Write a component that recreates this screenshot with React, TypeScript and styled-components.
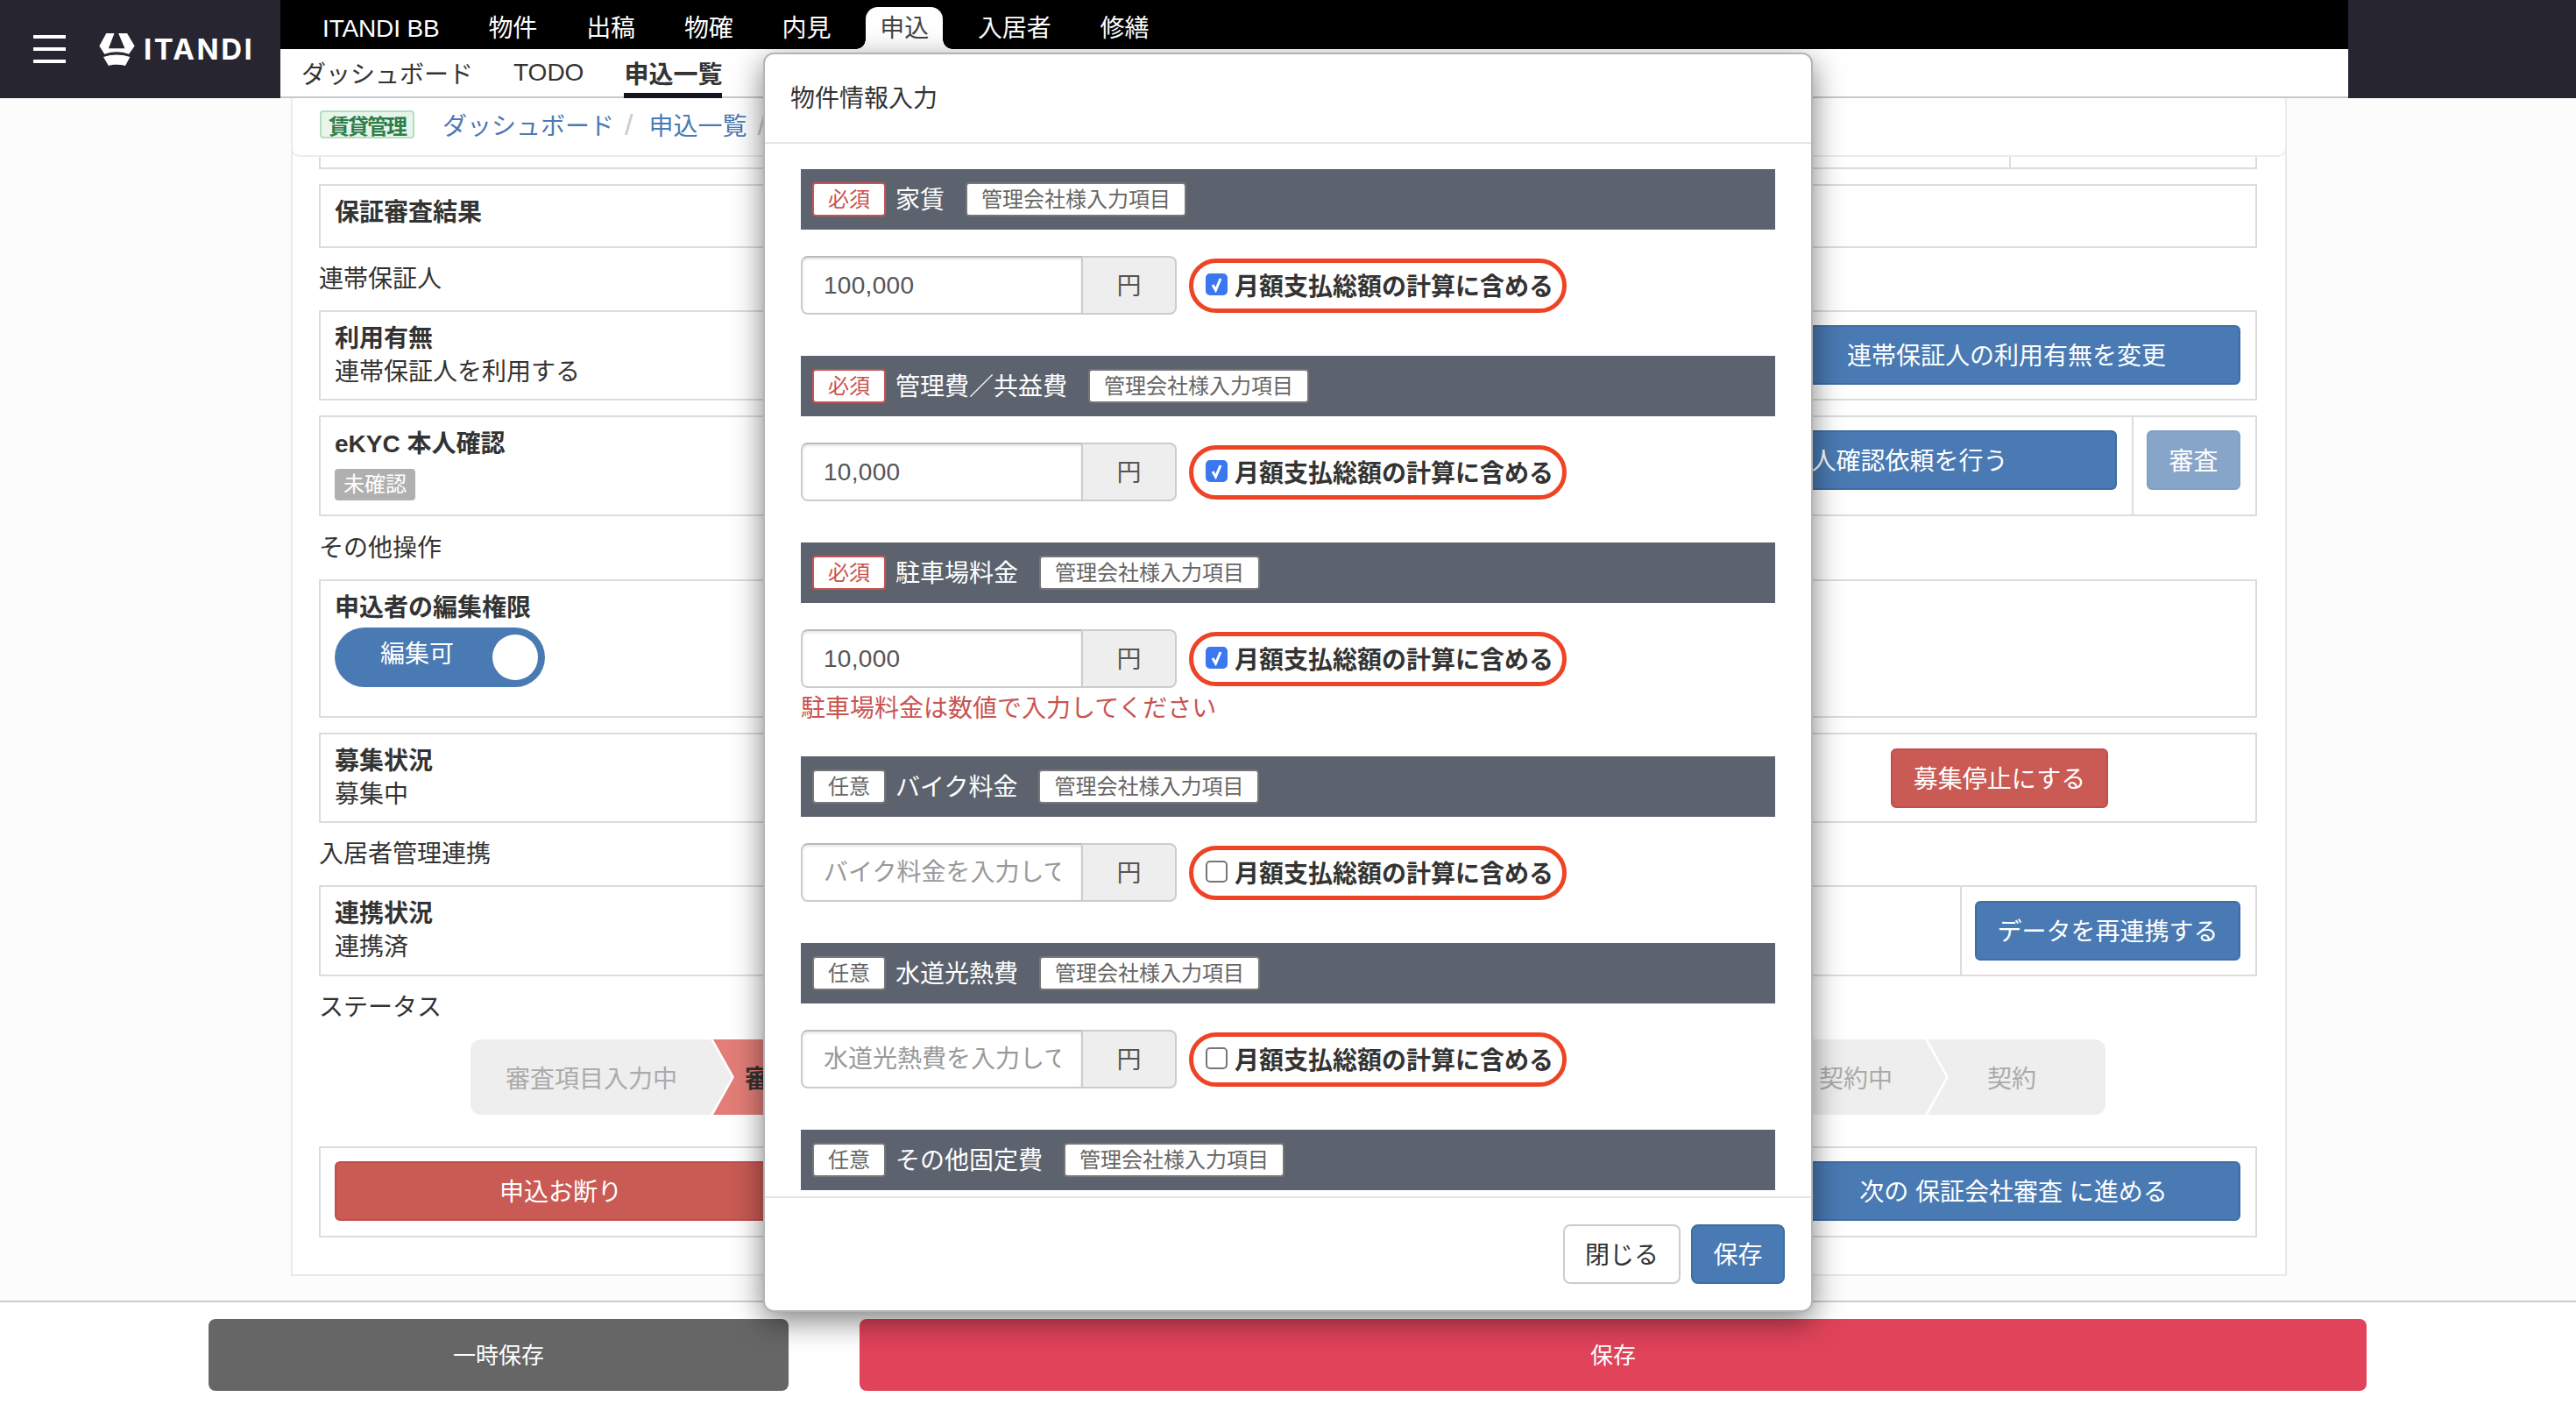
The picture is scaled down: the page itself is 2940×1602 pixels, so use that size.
import styled, { createGlobalStyle } from 'styled-components';

const FONT = `"Liberation Sans", "Noto Sans CJK JP", sans-serif`;

const GlobalStyle = createGlobalStyle`
  html, body {
    margin: 0;
    padding: 0;
    background: #fcfcfc;
    color: #333;
    font-family: ${FONT};
    font-size: 28px;
  }
  * {
    box-sizing: border-box;
  }
`;

const Page = styled.div`
  position: relative;
  width: 2940px;
  height: 1602px;
  overflow: hidden;
  background: #fcfcfc;
`;

/* header */
const Header = styled.header`
  display: flex;
  height: 112px;
  background: #272530;
`;

const Brand = styled.div`
  width: 320px;
  flex: none;
  display: flex;
  align-items: center;
  padding-left: 38px;
`;

const Burger = styled.div`
  width: 37px;
  height: 32px;
  display: flex;
  flex-direction: column;
  justify-content: space-between;
  margin-right: 37px;

  span {
    display: block;
    height: 4px;
    background: #fff;
  }
`;

const LogoText = styled.span`
  margin-left: 9px;
  font-family: Inter, ${FONT};
  font-size: 33px;
  font-weight: 700;
  color: #fff;
  letter-spacing: 2.5px;
`;

const NavStack = styled.div`
  width: 2360px;
  flex: none;
  display: flex;
  flex-direction: column;
`;

const TopNav = styled.nav`
  height: 56px;
  background: #000;
  display: flex;
  align-items: flex-end;
  padding-left: 20px;
  letter-spacing: -0.15px;
`;

const TopItem = styled.div<{ $active?: boolean }>`
  position: relative;
  height: ${({ $active }) => ($active ? '48px' : '56px')};
  padding: ${({ $active }) => ($active ? '2px 16px 0' : '10px 28px 0')};
  margin: 0 ${({ $active }) => ($active ? '12px' : '0')};
  display: flex;
  align-items: center;
  color: ${({ $active }) => ($active ? '#444' : '#fff')};
  background: ${({ $active }) => ($active ? '#fff' : 'transparent')};
  border-radius: 14px 14px 0 0;
  font-size: 28px;
  line-height: 1;

  ${({ $active }) =>
    $active &&
    `
    &::before, &::after {
      content: '';
      position: absolute;
      bottom: 0;
      width: 11px;
      height: 11px;
    }
    &::before {
      left: -11px;
      background: radial-gradient(circle at 0 0, #000 10.5px, #fff 11px);
    }
    &::after {
      right: -11px;
      background: radial-gradient(circle at 100% 0, #000 10.5px, #fff 11px);
    }
  `}
`;

const SubNav = styled.nav`
  height: 56px;
  background: #fff;
  border-bottom: 2px solid #c8c8cc;
  display: flex;
  padding-left: 24px;
  gap: 46px;
`;

const SubItem = styled.div<{ $active?: boolean }>`
  height: 56px;
  display: flex;
  align-items: center;
  font-size: 28px;
  font-weight: ${({ $active }) => ($active ? 700 : 400)};
  border-bottom: ${({ $active }) => ($active ? '6px solid #161320' : 'none')};
  padding-top: ${({ $active }) => ($active ? '6px' : '0')};
  padding-bottom: 2px;
`;

/* main card */
const MainCard = styled.main`
  width: 2278px;
  height: 1344px;
  margin-left: 332px;
  background: #fff;
  border: 2px solid #e9e9ec;
  border-top: none;
  display: flex;
  flex-direction: column;
  padding: 0 32px 0 30px;
  position: relative;
`;

const Breadcrumb = styled.div`
  position: absolute;
  left: -2px;
  top: 0;
  width: 2278px;
  height: 67px;
  background: #fff;
  border: 2px solid #ebebf0;
  border-top: none;
  border-radius: 0 0 10px 10px;
  display: flex;
  align-items: center;
  padding: 0 0 5px 31px;
  z-index: 2;
`;

const Badge = styled.span`
  width: 108px;
  height: 32px;
  background: #e8f5ea;
  border: 2px solid #b9dcc2;
  border-radius: 4px;
  color: #2f7d4a;
  font-size: 24px;
  font-weight: 700;
  letter-spacing: -2px;
  display: flex;
  align-items: center;
  justify-content: center;
  margin-right: 32px;
`;

const Crumb = styled.a`
  color: #4a7ab3;
  font-size: 28px;
`;

const CrumbSep = styled.span`
  color: #ccc;
  margin: 0 18px 0 12px;
  font-size: 34px;
  line-height: 1;
`;

const Row = styled.div<{ $h: number; $mt?: number }>`
  height: ${({ $h }) => $h}px;
  margin-top: ${({ $mt }) => $mt ?? 0}px;
  flex: none;
  border: 2px solid #dcdcde;
  display: flex;
`;

const ButtonRow = styled(Row)`
  align-items: center;
  justify-content: space-between;
  padding: 0 17px 2px 16px;
`;

const RowMain = styled.div`
  flex: 1;
  padding: 12px 16px 0;
  min-width: 0;
  line-height: 38px;
`;

const RowSide = styled.div<{ $w: number; $line?: boolean; $center?: boolean; $raised?: boolean }>`
  width: ${({ $w }) => $w}px;
  flex: none;
  display: flex;
  align-items: ${({ $raised }) => ($raised ? 'flex-start' : 'center')};
  justify-content: ${({ $center }) => ($center ? 'center' : 'flex-end')};
  padding-right: ${({ $center }) => ($center ? '0' : '17px')};
  padding-top: ${({ $raised }) => ($raised ? '15px' : '0')};
  border-left: ${({ $line }) => ($line ? '2px solid #dcdcde' : 'none')};
`;

const RowTitle = styled.div`
  font-weight: 700;
  font-size: 28px;
  color: #333;
`;

const RowValue = styled.div`
  font-size: 28px;
  color: #333;
`;

const SectionLabel = styled.div<{ $mt: number }>`
  height: 38px;
  line-height: 40px;
  margin-top: ${({ $mt }) => $mt}px;
  margin-bottom: 17px;
  font-size: 28px;
  color: #333;
`;

const GrayBadge = styled.span`
  display: inline-flex;
  align-items: center;
  justify-content: center;
  width: 92px;
  height: 36px;
  margin-top: 9px;
  background: #b0b0b0;
  color: #fff;
  border-radius: 4px;
  font-size: 24px;
  line-height: 1;
`;

const Toggle = styled.div`
  width: 240px;
  height: 68px;
  margin-top: 3px;
  border-radius: 34px;
  background: #4a7ab3;
  color: #fff;
  display: flex;
  align-items: center;
  justify-content: space-between;
  padding: 0 8px 0 52px;
  font-size: 28px;

  span {
    margin-bottom: 6px;
    line-height: 1;
  }

  i {
    width: 52px;
    height: 52px;
    border-radius: 50%;
    background: #fff;
  }
`;

const ActionButton = styled.button<{ $tone?: 'blue' | 'red' | 'muted'; $w: number }>`
  width: ${({ $w }) => $w}px;
  height: 68px;
  flex: none;
  padding: 0 0 2px;
  border: 2px solid
    ${({ $tone }) => ($tone === 'red' ? '#c14f49' : $tone === 'muted' ? '#80a0c6' : '#3f6da6')};
  border-radius: 6px;
  background: ${({ $tone }) => ($tone === 'red' ? '#c95a54' : $tone === 'muted' ? '#87a5c9' : '#4a7ab3')};
  color: #fff;
  font-family: ${FONT};
  font-size: 28px;
`;

/* stepper */
const Stepper = styled.div`
  height: 86px;
  margin: 1px 0 0 173px;
  width: 1866px;
  display: flex;
  flex: none;
  border-radius: 12px;
  overflow: hidden;
`;

const Step = styled.div<{ $w: number; $current?: boolean; $first?: boolean; $last?: boolean; $textLeft: number }>`
  width: ${({ $w }) => $w}px;
  flex: none;
  height: 86px;
  margin-left: ${({ $first }) => ($first ? '0' : '-21px')};
  padding-left: ${({ $textLeft }) => $textLeft}px;
  display: flex;
  align-items: center;
  background: ${({ $current }) => ($current ? '#e27d77' : '#eee')};
  color: ${({ $current }) => ($current ? '#333' : '#aaa')};
  font-size: 28px;
  font-weight: ${({ $current }) => ($current ? 700 : 400)};
  clip-path: ${({ $first, $last }) =>
    $first
      ? 'polygon(0 0, calc(100% - 24px) 0, 100% 50%, calc(100% - 24px) 100%, 0 100%)'
      : $last
        ? 'polygon(0 0, 100% 0, 100% 100%, 0 100%, 24px 50%)'
        : 'polygon(0 0, calc(100% - 24px) 0, 100% 50%, calc(100% - 24px) 100%, 0 100%, 24px 50%)'};
`;

/* footer bar */
const BottomBar = styled.footer`
  position: absolute;
  left: 0;
  top: 1484px;
  width: 2940px;
  height: 118px;
  background: #fff;
  border-top: 2px solid #ccc;
  display: flex;
  padding: 19px 239px 0 238px;
  gap: 81px;
`;

const BottomButton = styled.button<{ $grow?: boolean }>`
  height: 82px;
  padding: 0 0 4px;
  border: none;
  border-radius: 8px;
  width: ${({ $grow }) => ($grow ? 'auto' : '662px')};
  flex: ${({ $grow }) => ($grow ? '1' : 'none')};
  background: ${({ $grow }) => ($grow ? '#e0435a' : '#666')};
  color: #fff;
  font-family: ${FONT};
  font-size: 26px;
`;

/* modal */
const Modal = styled.section`
  position: absolute;
  left: 871px;
  top: 60px;
  width: 1198px;
  height: 1437px;
  background: #fff;
  border: 2px solid #b4b4b4;
  border-radius: 12px;
  box-shadow: 0 10px 34px rgba(0, 0, 0, 0.5);
  display: flex;
  flex-direction: column;
  z-index: 5;
`;

const ModalHead = styled.div`
  height: 102px;
  flex: none;
  border-bottom: 2px solid #e5e5e5;
  display: flex;
  align-items: center;
  padding: 0 0 4px 29px;
  font-size: 28px;
  color: #333;
`;

const ModalBody = styled.div`
  flex: 1;
  min-height: 0;
  overflow: hidden;
  padding: 29px 41px 0;
`;

const ModalFoot = styled.div`
  height: 130px;
  flex: none;
  border-top: 2px solid #e5e5e5;
  display: flex;
  justify-content: flex-end;
  gap: 12px;
  padding: 30px 30px 0 0;
`;

const CloseButton = styled.button`
  width: 134px;
  height: 68px;
  padding: 0 0 3px;
  background: #fff;
  border: 2px solid #ccc;
  border-radius: 8px;
  color: #333;
  font-family: ${FONT};
  font-size: 28px;
`;

const SaveButton = styled.button`
  width: 107px;
  height: 68px;
  padding: 0 0 3px;
  background: #4a7ab3;
  border: 2px solid #3f6da6;
  border-radius: 8px;
  color: #fff;
  font-family: ${FONT};
  font-size: 28px;
`;

const Field = styled.div`
  margin-bottom: 47px;
`;

const FieldHead = styled.div`
  height: 69px;
  background: #5c636e;
  display: flex;
  align-items: center;
  padding-left: 13px;
  color: #fff;
  font-size: 28px;
`;

const Chip = styled.span<{ $required?: boolean }>`
  height: 39px;
  display: inline-flex;
  align-items: center;
  padding: 0 16px;
  background: #fff;
  border: 2px solid ${({ $required }) => ($required ? '#c9534f' : '#777')};
  border-radius: 4px;
  color: ${({ $required }) => ($required ? '#c9534f' : '#666')};
  font-size: 24px;
  line-height: 1;
`;

const FieldTitle = styled.span`
  margin: 0 24px 0 11px;
  padding-bottom: 3px;
`;

const FieldRow = styled.div`
  display: flex;
  align-items: center;
  margin-top: 30px;
  height: 67px;
`;

const InputGroup = styled.div`
  width: 429px;
  height: 67px;
  flex: none;
  display: flex;
`;

const AmountInput = styled.input`
  width: 322px;
  height: 67px;
  padding: 0 24px;
  border: 2px solid #ccc;
  border-top-color: #bbb;
  border-radius: 8px 0 0 8px;
  box-shadow: inset 0 2px 3px rgba(0, 0, 0, 0.1);
  font-family: ${FONT};
  font-size: 28px;
  letter-spacing: 0.3px;
  color: #555;
  outline: none;

  &::placeholder {
    color: #999;
    opacity: 1;
    letter-spacing: 0;
  }
`;

const Addon = styled.div`
  flex: 1;
  height: 67px;
  padding-bottom: 3px;
  background: #eee;
  border: 2px solid #ccc;
  border-left: none;
  border-radius: 0 8px 8px 0;
  color: #555;
  display: flex;
  align-items: center;
  justify-content: center;
  font-size: 28px;
`;

const IncludeLabel = styled.label`
  width: 431px;
  height: 62px;
  margin-left: 14px;
  border: 5px solid #ee4425;
  border-radius: 31px;
  background: #fff;
  display: flex;
  align-items: center;
  padding: 0 0 2px 14px;
  font-size: 28px;
  font-weight: 700;
  color: #333;
  white-space: nowrap;
`;

const CheckMark = styled.span<{ $on?: boolean }>`
  width: 25px;
  height: 25px;
  flex: none;
  margin-right: 8px;
  border-radius: 5px;
  background: ${({ $on }) => ($on ? '#3b78f0' : '#fff')};
  border: 2px solid ${({ $on }) => ($on ? '#3b78f0' : '#767676')};
  display: flex;
  align-items: center;
  justify-content: center;
`;

const ErrorText = styled.div`
  height: 40px;
  padding-top: 8px;
  margin-bottom: -9px;
  line-height: 32px;
  font-size: 28px;
  color: #c9534f;
`;

type FieldItem = {
  title: string;
  required: boolean;
  value?: string;
  placeholder?: string;
  checked: boolean;
  error?: string;
};

const fields: FieldItem[] = [
  { title: '家賃', required: true, value: '100,000', checked: true },
  { title: '管理費／共益費', required: true, value: '10,000', checked: true },
  {
    title: '駐車場料金',
    required: true,
    value: '10,000',
    checked: true,
    error: '駐車場料金は数値で入力してください',
  },
  { title: 'バイク料金', required: false, placeholder: 'バイク料金を入力してください', checked: false },
  { title: '水道光熱費', required: false, placeholder: '水道光熱費を入力してください', checked: false },
  { title: 'その他固定費', required: false, placeholder: 'その他固定費を入力してください', checked: false },
];

const topNav = ['ITANDI BB', '物件', '出稿', '物確', '内見', '申込', '入居者', '修繕'];

const App = () => {
  return (
    <Page>
      <GlobalStyle />
      <Header>
        <Brand>
          <Burger>
            <span />
            <span />
            <span />
          </Burger>
          {/* logo mark */}
          <svg width="43" height="39" viewBox="40 35 130 118">
            <path
              fill="#fff"
              d="M68 38H96L76 90H132L110 38H140L166 82L146 110C120 100 90 100 62 110L44 82Z"
            />
            <path fill="#fff" d="M58 120C88 110 120 110 150 120L134 150C115 145 92 145 76 150Z" />
          </svg>
          <LogoText>ITANDI</LogoText>
        </Brand>
        <NavStack>
          <TopNav>
            {topNav.map((item) => (
              <TopItem key={item} $active={item === '申込'}>
                {item}
              </TopItem>
            ))}
          </TopNav>
          <SubNav>
            <SubItem>ダッシュボード</SubItem>
            <SubItem>TODO</SubItem>
            <SubItem $active>申込一覧</SubItem>
          </SubNav>
        </NavStack>
      </Header>

      <MainCard>
        <Breadcrumb>
          <Badge>賃貸管理</Badge>
          <Crumb>ダッシュボード</Crumb>
          <CrumbSep>/</CrumbSep>
          <Crumb>申込一覧</Crumb>
          <CrumbSep>/</CrumbSep>
        </Breadcrumb>

        <Row $h={81}>
          <RowMain />
          <RowSide $w={281} $line />
        </Row>
        <Row $h={73} $mt={17}>
          <RowMain>
            <RowTitle>保証審査結果</RowTitle>
          </RowMain>
        </Row>
        <SectionLabel $mt={16}>連帯保証人</SectionLabel>
        <Row $h={103}>
          <RowMain>
            <RowTitle>利用有無</RowTitle>
            <RowValue>連帯保証人を利用する</RowValue>
          </RowMain>
          <RowSide $w={600} $raised>
            <ActionButton $w={534}>連帯保証人の利用有無を変更</ActionButton>
          </RowSide>
        </Row>
        <Row $h={115} $mt={17}>
          <RowMain>
            <RowTitle>eKYC 本人確認</RowTitle>
            <GrayBadge>未確認</GrayBadge>
          </RowMain>
          <RowSide $w={600} $raised>
            <ActionButton $w={582}>eKYC 本人確認依頼を行う</ActionButton>
          </RowSide>
          <RowSide $w={141} $line $raised>
            <ActionButton $tone="muted" $w={107}>
              審査
            </ActionButton>
          </RowSide>
        </Row>
        <SectionLabel $mt={17}>その他操作</SectionLabel>
        <Row $h={158}>
          <RowMain>
            <RowTitle>申込者の編集権限</RowTitle>
            <Toggle>
              <span>編集可</span>
              <i />
            </Toggle>
          </RowMain>
        </Row>
        <Row $h={103} $mt={17}>
          <RowMain>
            <RowTitle>募集状況</RowTitle>
            <RowValue>募集中</RowValue>
          </RowMain>
          <RowSide $w={584} $center>
            <ActionButton $tone="red" $w={248}>
              募集停止にする
            </ActionButton>
          </RowSide>
        </Row>
        <SectionLabel $mt={16}>入居者管理連携</SectionLabel>
        <Row $h={104}>
          <RowMain>
            <RowTitle>連携状況</RowTitle>
            <RowValue>連携済</RowValue>
          </RowMain>
          <RowSide $w={337} $line>
            <ActionButton $w={303}>データを再連携する</ActionButton>
          </RowSide>
        </Row>
        <SectionLabel $mt={16}>ステータス</SectionLabel>
        <Stepper>
          <Step $first $w={298} $textLeft={40}>審査項目入力中</Step>
          <Step $current $w={386} $textLeft={36}>審査中</Step>
          <Step $w={400} $textLeft={60} />
          <Step $w={413} $textLeft={60} />
          <Step $w={271} $textLeft={126}>契約中</Step>
          <Step $last $w={203} $textLeft={68}>契約</Step>
        </Stepper>
        <ButtonRow $h={104} $mt={36}>
          <ActionButton $tone="red" $w={516}>
            申込お断り
          </ActionButton>
          <ActionButton $w={518}>次の 保証会社審査 に進める</ActionButton>
        </ButtonRow>
      </MainCard>

      <BottomBar>
        <BottomButton>一時保存</BottomButton>
        <BottomButton $grow>保存</BottomButton>
      </BottomBar>

      <Modal>
        <ModalHead>物件情報入力</ModalHead>
        <ModalBody>
          {fields.map((field) => (
            <Field key={field.title}>
              <FieldHead>
                <Chip $required={field.required}>{field.required ? '必須' : '任意'}</Chip>
                <FieldTitle>{field.title}</FieldTitle>
                <Chip>管理会社様入力項目</Chip>
              </FieldHead>
              <FieldRow>
                <InputGroup>
                  <AmountInput defaultValue={field.value} placeholder={field.placeholder} />
                  <Addon>円</Addon>
                </InputGroup>
                <IncludeLabel>
                  <CheckMark $on={field.checked}>
                    {field.checked && (
                      <svg width="17" height="19" viewBox="0 0 17 19">
                        <path d="M4 10l3.5 6L13 3" fill="none" stroke="#fff" strokeWidth="3" />
                      </svg>
                    )}
                  </CheckMark>
                  月額支払総額の計算に含める
                </IncludeLabel>
              </FieldRow>
              {field.error && <ErrorText>{field.error}</ErrorText>}
            </Field>
          ))}
        </ModalBody>
        <ModalFoot>
          <CloseButton>閉じる</CloseButton>
          <SaveButton>保存</SaveButton>
        </ModalFoot>
      </Modal>
    </Page>
  );
};

export default App;
